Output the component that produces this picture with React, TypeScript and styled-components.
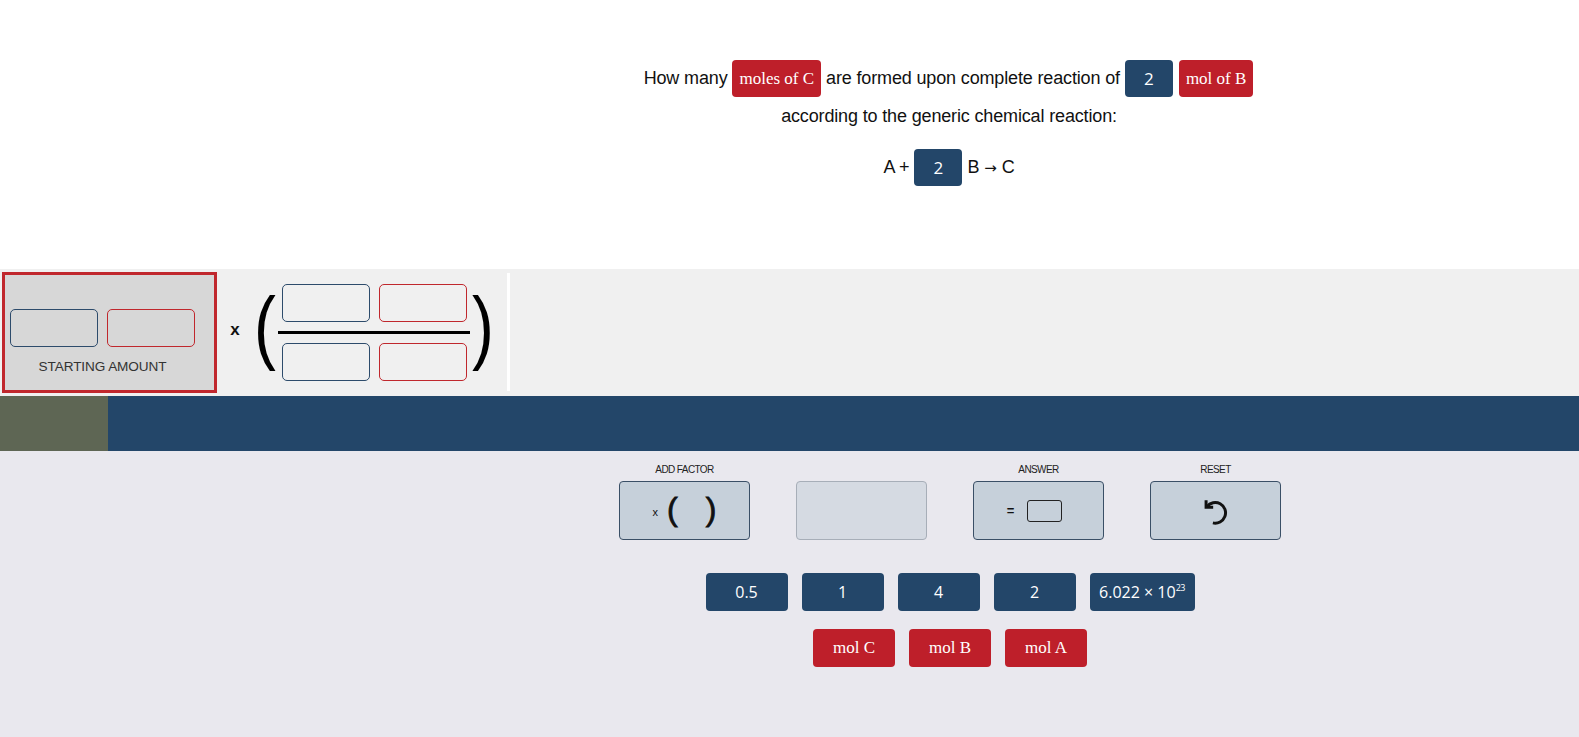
import React from "react";
import styled, { createGlobalStyle } from "styled-components";

const Global = createGlobalStyle`
  html, body { margin: 0; padding: 0; background: #ffffff; overflow: hidden; }
  body { font-family: "Liberation Sans", Arial, sans-serif; }
  * { box-sizing: border-box; }
`;

const BLUE = "#234669";
const RED = "#be1f2a";

const Page = styled.div`
  width: 100%;
  height: 737px;
  overflow: hidden;
  display: flex;
  flex-direction: column;
`;

const Question = styled.section`
  flex: 0 0 269px;
  background: #ffffff;
  padding: 60px 0 0 319px;
  display: flex;
  flex-direction: column;
  align-items: center;
  color: #111;
  font-size: 18px;
  letter-spacing: -0.15px;
`;

const Line = styled.div<{ $mt?: number }>`
  display: flex;
  align-items: center;
  gap: 4px;
  margin-top: ${(p) => p.$mt ?? 0}px;
  height: 37px;
  white-space: nowrap;
`;

const Arrow = styled.span`
  font-family: "DejaVu Sans", sans-serif;
  font-size: 15px;
  margin: 0 1px;
`;

const Pill = styled.span<{ $kind: "red" | "blue"; $w?: number }>`
  display: inline-flex;
  align-items: center;
  justify-content: center;
  height: 37px;
  min-width: ${(p) => p.$w ?? 0}px;
  padding: 0 7px;
  border-radius: 4px;
  background: ${(p) => (p.$kind === "red" ? RED : BLUE)};
  color: #fff;
  letter-spacing: 0;
  font-family: ${(p) =>
    p.$kind === "red"
      ? `"Liberation Serif", "Times New Roman", serif`
      : `"Open Sans", sans-serif`};
  font-size: 17px;
  margin: 0 1px;
`;

const Band = styled.section`
  flex: 0 0 127px;
  background: #f0f0f0;
  display: flex;
  align-items: stretch;
  padding: 3px 0 3px 2px;
`;

const StartPanel = styled.div`
  width: 215px;
  border: 3px solid #c0272d;
  background: #d7d7d7;
  display: flex;
  flex-direction: column;
  align-items: center;
  padding: 34px 19px 0 5px;
`;

const InputPair = styled.div`
  display: flex;
  gap: 9px;
`;

const Slot = styled.div<{ $kind: "red" | "blue" }>`
  width: 88px;
  height: 38px;
  border-radius: 5px;
  border: 1px solid ${(p) => (p.$kind === "red" ? "#c0272d" : "#2d4b6b")};
  background: transparent;
`;

const PanelLabel = styled.div`
  margin-top: 12px;
  font-size: 13.6px;
  color: #333;
  letter-spacing: -0.1px;
`;

const Times = styled.div`
  width: 36px;
  display: flex;
  align-items: center;
  justify-content: center;
  font-size: 17px;
  font-weight: bold;
  color: #111;
  padding-bottom: 6px;
`;

const Paren = styled.div`
  font-family: "Liberation Sans", Arial, sans-serif;
  font-size: 82px;
  line-height: 1;
  display: flex;
  align-items: center;
  justify-content: center;
  color: #000;
  width: 24px;
  padding-bottom: 13px;
  transform: scaleX(0.8);
`;

const Fraction = styled.div`
  display: flex;
  flex-direction: column;
  align-items: center;
  justify-content: center;
  padding: 0 1px;
`;

const FracRow = styled.div`
  display: flex;
  gap: 9px;
`;

const FracLine = styled.div`
  width: 192px;
  height: 3px;
  background: #000;
  margin: 9px 0;
`;

const Divider = styled.div`
  width: 3px;
  background: #ffffff;
  margin: 1px 0 2px 12px;
`;

const Bar = styled.div`
  flex: 0 0 55px;
  background: ${BLUE};
  display: flex;
`;

const BarTab = styled.div`
  width: 108px;
  background: #5e6654;
`;

const Controls = styled.section`
  flex: 1;
  background: #e9e8ee;
  padding: 12px 0 0 321px;
  display: flex;
  flex-direction: column;
  align-items: center;
`;

const Toolbar = styled.div`
  display: flex;
  gap: 46px;
`;

const Tool = styled.div`
  display: flex;
  flex-direction: column;
  align-items: center;
  gap: 5px;
`;

const ToolLabel = styled.div`
  height: 13px;
  font-size: 10px;
  letter-spacing: -0.6px;
  color: #222;
  line-height: 13px;
`;

const ToolButton = styled.div<{ $disabled?: boolean }>`
  width: 131px;
  height: 59px;
  border-radius: 4px;
  background: ${(p) => (p.$disabled ? "#d5dae2" : "#c6d0da")};
  border: 1px solid ${(p) => (p.$disabled ? "#a7aeb8" : "#3a4f66")};
  display: flex;
  align-items: center;
  justify-content: center;
  color: #111;
`;

const SmallX = styled.span`
  font-size: 11px;
  margin-right: 9px;
  margin-top: 2px;
`;

const BtnParen = styled.span`
  font-size: 32px;
  line-height: 1;
  padding-bottom: 4px;
  -webkit-text-stroke: 0.8px #111;
`;

const ParenGap = styled.span`
  width: 28px;
`;

const Eq = styled.span`
  font-size: 13px;
  font-weight: bold;
  margin-right: 13px;
`;

const AnswerBox = styled.span`
  width: 35px;
  height: 22px;
  border: 1.5px solid #222;
  border-radius: 3px;
  margin-right: 8px;
`;

const TileRow = styled.div<{ $mt: number }>`
  display: flex;
  gap: 14px;
  margin-top: ${(p) => p.$mt}px;
`;

const Tile = styled.div<{ $kind: "red" | "blue"; $w?: number }>`
  width: ${(p) => p.$w ?? 82}px;
  height: 38px;
  border-radius: 4px;
  background: ${(p) => (p.$kind === "red" ? RED : BLUE)};
  color: #fff;
  display: flex;
  align-items: center;
  justify-content: center;
  font-family: ${(p) =>
    p.$kind === "red"
      ? `"Liberation Serif", "Times New Roman", serif`
      : `"Open Sans", sans-serif`};
  font-size: ${(p) => (p.$kind === "red" ? 17 : 16)}px;
  white-space: nowrap;
`;

const Sup = styled.span`
  font-size: 9px;
  position: relative;
  top: -5px;
  letter-spacing: -0.5px;
`;

const ResetIcon = () => (
  <svg width="34" height="34" viewBox="0 0 24 24" fill="none" stroke="#111" strokeWidth="2.1" strokeLinecap="butt" strokeLinejoin="miter">
    <path d="M5 4.4 V9.4 H10" />
    <path d="M5.6 8.9 A7.3 7.3 0 1 1 9.8 20.4" />
  </svg>
);

export default function App() {
  return (
    <Page>
      <Global />
      <Question>
        <Line>
          How many <Pill $kind="red">moles of C</Pill> are formed upon complete reaction of{" "}
          <Pill $kind="blue" $w={48}>2</Pill>
          <Pill $kind="red">mol of B</Pill>
        </Line>
        <Line $mt={1}>according to the generic chemical reaction:</Line>
        <Line $mt={14}>
          A + <Pill $kind="blue" $w={48}>2</Pill> B <Arrow>→</Arrow> C
        </Line>
      </Question>
      <Band>
        <StartPanel>
          <InputPair>
            <Slot $kind="blue" />
            <Slot $kind="red" />
          </InputPair>
          <PanelLabel>STARTING AMOUNT</PanelLabel>
        </StartPanel>
        <Times>x</Times>
        <Paren>(</Paren>
        <Fraction>
          <FracRow>
            <Slot $kind="blue" />
            <Slot $kind="red" />
          </FracRow>
          <FracLine />
          <FracRow>
            <Slot $kind="blue" />
            <Slot $kind="red" />
          </FracRow>
        </Fraction>
        <Paren>)</Paren>
        <Divider />
      </Band>
      <Bar>
        <BarTab />
      </Bar>
      <Controls>
        <Toolbar>
          <Tool>
            <ToolLabel>ADD FACTOR</ToolLabel>
            <ToolButton>
              <SmallX>x</SmallX>
              <BtnParen>(</BtnParen>
              <ParenGap />
              <BtnParen>)</BtnParen>
            </ToolButton>
          </Tool>
          <Tool>
            <ToolLabel />
            <ToolButton $disabled />
          </Tool>
          <Tool>
            <ToolLabel>ANSWER</ToolLabel>
            <ToolButton>
              <Eq>=</Eq>
              <AnswerBox />
            </ToolButton>
          </Tool>
          <Tool>
            <ToolLabel>RESET</ToolLabel>
            <ToolButton>
              <ResetIcon />
            </ToolButton>
          </Tool>
        </Toolbar>
        <TileRow $mt={33}>
          <Tile $kind="blue">0.5</Tile>
          <Tile $kind="blue">1</Tile>
          <Tile $kind="blue">4</Tile>
          <Tile $kind="blue">2</Tile>
          <Tile $kind="blue" $w={105}>
            6.022 × 10<Sup>23</Sup>
          </Tile>
        </TileRow>
        <TileRow $mt={18}>
          <Tile $kind="red">mol C</Tile>
          <Tile $kind="red">mol B</Tile>
          <Tile $kind="red">mol A</Tile>
        </TileRow>
      </Controls>
    </Page>
  );
}
